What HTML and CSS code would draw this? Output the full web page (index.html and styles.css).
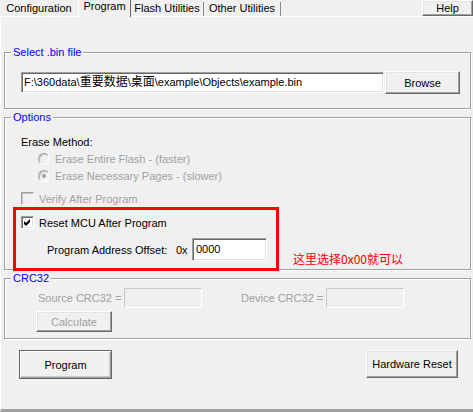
FILE: index.html
```html
<!DOCTYPE html>
<html>
<head>
<meta charset="utf-8">
<link rel="stylesheet" href="styles.css">
</head>
<body>
<div class="tabbar">
  <div class="tab t-config">Configuration</div>
  <div class="tab sel t-program">Program</div>
  <div class="tab sep t-flash">Flash Utilities</div>
  <div class="tab sep t-other">Other Utilities</div>
  <div class="btn help">Help</div>
</div>
<div class="panel">
  <div class="group g1">
    <div class="legend">Select .bin file</div>
    <div class="gbody g1-body">
      <div class="field file">F:\360data\<span class="cjk">重要数据</span>\<span class="cjk">桌面</span>\example\Objects\example.bin</div>
      <div class="btn browse">Browse</div>
    </div>
  </div>

  <div class="group g2">
    <div class="legend">Options</div>
    <div class="gbody g2-body">
      <div class="line">Erase Method:</div>
      <div class="line opt dis"><span class="radio"></span>Erase Entire Flash - (faster)</div>
      <div class="line opt dis"><span class="radio on"></span>Erase Necessary Pages - (slower)</div>
      <div class="line chk dis verify"><span class="box"></span>Verify After Program</div>
      <div class="line chk reset"><span class="box white"><svg width="13" height="13" viewBox="0 0 13 13"><polygon points="3,5 5,7 9,3 9,6 5,10 3,8" fill="#000"/></svg></span>Reset MCU After Program</div>
      <div class="offset-row">
        <span class="offset-label">Program Address Offset:</span>
        <span class="hex">0x</span>
        <div class="field offset">0000</div>
      </div>
    </div>
  </div>

  <div class="group g3">
    <div class="legend">CRC32</div>
    <div class="gbody g3-body">
      <div class="crc-row dis">
        <span class="crc-label src">Source CRC32 =</span>
        <div class="field disfield"></div>
        <span class="crc-label dev">Device CRC32 =</span>
        <div class="field disfield"></div>
      </div>
      <div class="btn calc dis">Calculate</div>
    </div>
  </div>

  <div class="actions">
    <div class="btn default program">Program</div>
    <div class="btn hwreset">Hardware Reset</div>
  </div>
</div>
<div class="redbox"></div>
<div class="note">这里选择0x00就可以</div>
</body>
</html>
```

FILE: styles.css
```css
html, body {
  margin: 0;
  padding: 0;
}
body {
  width: 473px;
  height: 412px;
  overflow: hidden;
  position: relative;
  background: #f0f0f0;
  color: #000;
  font-family: "Liberation Sans", "Noto Sans CJK SC", sans-serif;
  font-size: 11px;
}

/* ---------- tabs ---------- */
.tabbar {
  display: flex;
  align-items: flex-end;
  height: 16px;
  border-bottom: 1px solid #fff;
}
.tab {
  box-sizing: border-box;
  height: 14px;
  line-height: 13px;
  text-align: center;
  white-space: nowrap;
}
.t-config { width: 78px; }
.t-program { width: 53px; }
.t-flash { width: 73px; }
.t-other { width: 77px; }
.tab.sel {
  height: 17px;
  margin-bottom: -1px;
  background: #f0f0f0;
  border-left: 1px solid #fff;
  border-right: 1px solid #696969;
}
.tab.sep {
  border-right: 1px solid #8a8a8a;
}

/* ---------- buttons ---------- */
.btn {
  box-sizing: border-box;
  display: flex;
  align-items: center;
  justify-content: center;
  background: #f0f0f0;
  border: 1px solid;
  border-color: #fff #696969 #696969 #fff;
  box-shadow: inset -1px -1px 0 #a0a0a0, inset 1px 1px 0 #e3e3e3;
  white-space: nowrap;
}
.help {
  align-self: flex-start;
  margin-left: auto;
  width: 51px;
  height: 16px;
}
.browse {
  width: 75px;
  height: 23px;
  margin-left: 1px;
}
.calc {
  width: 76px;
  height: 21px;
  margin-top: 3px;
  color: #a0a0a0;
}
.btn.default {
  border: 1px solid #646464;
  box-shadow: inset 1px 1px 0 #fff, inset -1px -1px 0 #a0a0a0, inset -2px -2px 0 #c8c8c8;
}
.program {
  width: 93px;
  height: 29px;
  margin-left: 15px;
}
.hwreset {
  width: 92px;
  height: 28px;
  margin-right: 13px;
}

/* ---------- panel & groups ---------- */
.panel {
  display: flex;
  flex-direction: column;
  height: 392px;
  padding: 0 2px 0 3px;
  border-left: 1px solid #fff;
  border-bottom: 3px solid #a0a0a0;
}
.group {
  border: 1px solid #a0a0a0;
  box-shadow: inset 1px 1px 0 #fff, 1px 1px 0 #fff;
}
.g1 { margin-top: 35px; }
.g2 { margin-top: 8px; }
.g3 { margin-top: 8px; }
.legend {
  align-self: flex-start;
  width: max-content;
  margin: -7px 0 0 6px;
  padding: 0 2px;
  line-height: 13px;
  color: #0000ff;
  background: #f0f0f0;
}
.gbody {
  display: flex;
  flex-direction: column;
}
.g1-body {
  flex-direction: row;
  align-items: center;
  padding: 12px 0 14px 16px;
  height: 23px;
}
.g2-body {
  padding: 9px 0 8px 16px;
}
.g3-body {
  padding: 3px 0 6px 31px;
}

/* ---------- fields ---------- */
.field {
  box-sizing: border-box;
  background: #fff;
  border: 1px solid;
  border-color: #a0a0a0 #fff #fff #a0a0a0;
  box-shadow: inset 1px 1px 0 #696969, inset -1px -1px 0 #e3e3e3;
  white-space: nowrap;
  overflow: hidden;
}
.file {
  width: 363px;
  height: 21px;
  line-height: 19px;
  padding-left: 2px;
}
.cjk {
  font-size: 12px;
}
.offset {
  width: 75px;
  height: 23px;
  line-height: 21px;
  padding-left: 3px;
}
.disfield {
  width: 78px;
  height: 20px;
  background: #f0f0f0;
  border-color: #c8c8c8 #fff #fff #c8c8c8;
  box-shadow: none;
}

/* ---------- option lines ---------- */
.line {
  display: flex;
  align-items: center;
  height: 17px;
  white-space: nowrap;
}
.dis {
  color: #a0a0a0;
}
.opt {
  padding-left: 17px;
}
.verify { margin-top: 6px; }
.reset { margin-top: 7px; }

.radio {
  box-sizing: border-box;
  position: relative;
  width: 12px;
  height: 12px;
  margin-right: 5px;
  border-radius: 50%;
  border: 1px solid;
  border-color: #a0a0a0 #fff #fff #a0a0a0;
  background: #f0f0f0;
  box-shadow: inset 1px 1px 0 #c4c4c4;
}
.radio.on::after {
  content: "";
  position: absolute;
  left: 3px;
  top: 3px;
  width: 4px;
  height: 4px;
  border-radius: 50%;
  background: #a0a0a0;
}
.box {
  box-sizing: border-box;
  display: flex;
  width: 13px;
  height: 13px;
  margin-right: 5px;
  border: 1px solid;
  border-color: #a0a0a0 #fff #fff #a0a0a0;
  background: #f0f0f0;
  box-shadow: inset 1px 1px 0 #c4c4c4;
}
.box.white {
  background: #fff;
  box-shadow: inset 1px 1px 0 #696969, inset -1px -1px 0 #e3e3e3;
}
.box svg {
  margin: -1px 0 0 -1px;
  flex: none;
}

.offset-row {
  display: flex;
  align-items: center;
  height: 23px;
  margin-top: 7px;
  padding-left: 26px;
  white-space: nowrap;
}
.offset-label {
  width: 129px;
}
.hex {
  width: 16px;
}

/* ---------- crc ---------- */
.crc-row {
  display: flex;
  align-items: center;
  height: 20px;
  padding-left: 2px;
  white-space: nowrap;
}
.crc-label.src { width: 86px; }
.crc-label.dev { width: 85px; margin-left: 39px; }

/* ---------- actions ---------- */
.actions {
  display: flex;
  justify-content: space-between;
  align-items: flex-start;
  margin-top: 11px;
}

/* ---------- annotation overlay ---------- */
.redbox {
  position: absolute;
  left: 13px;
  top: 207px;
  width: 266px;
  height: 64px;
  box-sizing: border-box;
  border: 3px solid #ff0000;
}
.note {
  position: absolute;
  left: 293px;
  top: 251px;
  line-height: 16px;
  font-family: "Noto Sans CJK SC", sans-serif;
  font-size: 12px;
  color: #ff0000;
  white-space: nowrap;
}
```
